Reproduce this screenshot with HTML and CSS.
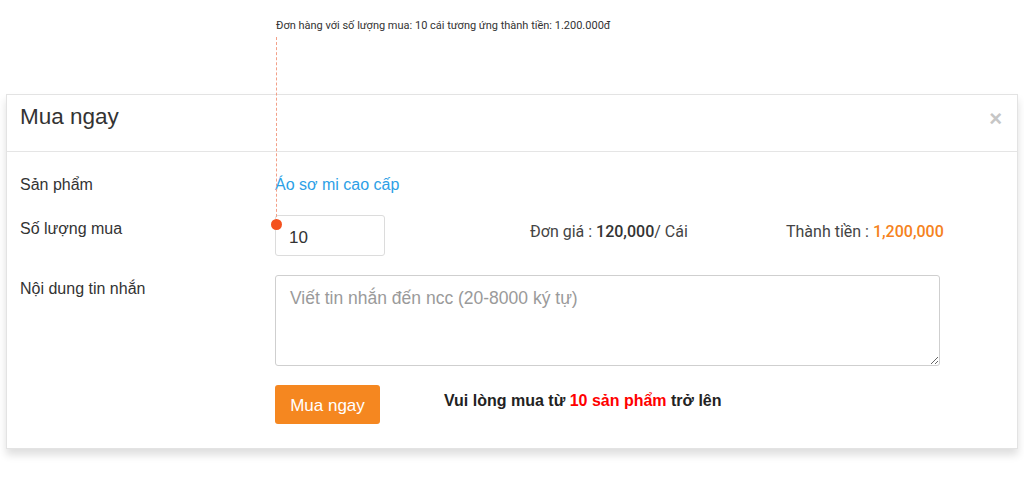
FILE: index.html
```html
<!DOCTYPE html>
<html lang="vi">
<head>
    <meta charset="UTF-8">
    <title>Mua ngay</title>
    <link rel="stylesheet" href="styles.css">
</head>
<body>
<div class="page">
    <p class="note">Đơn hàng với số lượng mua: 10 cái tương ứng thành tiền: 1.200.000đ</p>
    <div class="pointer"><span class="pointer-dot"></span></div>

    <div class="modal">
        <div class="modal-head">
            <h3 class="modal-title">Mua ngay</h3>
            <span class="modal-close">&times;</span>
        </div>
        <div class="modal-body">
            <div class="row row-product">
                <div class="label">Sản phẩm</div>
                <div class="field"><a class="product-link" href="#">Áo sơ mi cao cấp</a></div>
            </div>

            <div class="row row-qty">
                <div class="label">Số lượng mua</div>
                <div class="field qty-field">
                    <input class="qty" type="text" value="10">
                    <span class="price">Đơn giá : <b>120,000</b>/ Cái</span>
                    <span class="total">Thành tiền : <b>1,200,000</b></span>
                </div>
            </div>

            <div class="row row-msg">
                <div class="label">Nội dung tin nhắn</div>
                <div class="field">
                    <textarea class="msg" placeholder="Viết tin nhắn đến ncc (20-8000 ký tự)"></textarea>
                </div>
            </div>

            <div class="row row-submit">
                <div class="label"></div>
                <div class="field submit-field">
                    <button class="btn-buy" type="button">Mua ngay</button>
                    <span class="hint">Vui lòng mua từ <em>10 sản phẩm</em> trở lên</span>
                </div>
            </div>
        </div>
    </div>
</div>
</body>
</html>
```

FILE: styles.css
```css
html, body {
    height: 100%;
}

body {
    margin: 0;
    background: #fff;
    font-family: "Liberation Sans", Arial, sans-serif;
    color: #333;
}

p, h3 {
    margin: 0;
    padding: 0;
}

.page {
    position: relative;
    padding: 19px 6px 0;
}

/* chú thích phía trên */
.note {
    margin-left: 270px;
    height: 75px;
    font-family: Roboto, "Liberation Sans", sans-serif;
    font-size: 11px;
    line-height: 14px;
    color: #333;
}

.pointer {
    position: absolute;
    left: 276px;
    top: 37px;
    width: 0;
    height: 185px;
    border-left: 1px dashed #f3a088;
    z-index: 2;
}

.pointer-dot {
    position: absolute;
    left: -6px;
    bottom: -8px;
    width: 11px;
    height: 11px;
    border-radius: 50%;
    background: #f4511e;
}

/* hộp thoại */
.modal {
    background: #fff;
    border: 1px solid #e3e3e3;
    box-shadow: 0 6px 8px rgba(0, 0, 0, 0.13);
}

.modal-head {
    height: 56px;
    display: flex;
    align-items: center;
    justify-content: space-between;
    padding: 0 15px 0 13px;
    border-bottom: 1px solid #e5e5e5;
}

.modal-title {
    font-size: 22.5px;
    font-weight: normal;
    color: #333;
    margin-top: -12px;
}

.modal-close {
    font-size: 22px;
    font-weight: bold;
    color: #c6c6c6;
    margin-top: -8px;
}

.modal-body {
    padding: 22px 13px 24px;
    display: flex;
    flex-direction: column;
    gap: 19px;
}

.row {
    display: grid;
    grid-template-columns: 255px 1fr;
}

.label {
    font-size: 16px;
    line-height: 22px;
}

.row-qty .label {
    padding-top: 3px;
}

.row-msg .label {
    padding-top: 3px;
}

.product-link {
    font-size: 16px;
    line-height: 22px;
    color: #2d9fe6;
    text-decoration: none;
}

.qty-field {
    display: grid;
    grid-template-columns: 255px 256px auto;
    align-items: center;
}

.qty {
    width: 110px;
    height: 41px;
    box-sizing: border-box;
    border: 1px solid #dcdcdc;
    border-radius: 3px;
    padding: 4px 13px 0;
    font-family: "Liberation Sans", Arial, sans-serif;
    font-size: 17px;
    color: #333;
    outline: none;
}

.price, .total {
    font-family: Roboto, "Liberation Sans", sans-serif;
    font-size: 16px;
    color: #444;
    margin-top: -8px;
}

.price b {
    color: #333;
    font-weight: 500;
}

.total b {
    color: #f58220;
    font-weight: 500;
}

.msg {
    display: block;
    width: 665px;
    height: 91px;
    box-sizing: border-box;
    border: 1px solid #cfcfcf;
    border-radius: 3px;
    padding: 12px 14px;
    font-family: "Liberation Sans", Arial, sans-serif;
    font-size: 17.5px;
    color: #333;
    resize: vertical;
    outline: none;
}

.msg::placeholder {
    color: #9a9a9a;
}

.submit-field {
    display: flex;
    align-items: center;
    gap: 64px;
}

.btn-buy {
    width: 105px;
    height: 39px;
    border: none;
    border-radius: 3px;
    background: #f58720;
    color: #fff;
    font-family: "Liberation Sans", Arial, sans-serif;
    font-size: 17px;
    padding: 2px 0 0;
}

.hint {
    font-size: 16px;
    font-weight: bold;
    color: #222;
    margin-top: -8px;
}

.hint em {
    font-style: normal;
    color: #f00;
}
```
